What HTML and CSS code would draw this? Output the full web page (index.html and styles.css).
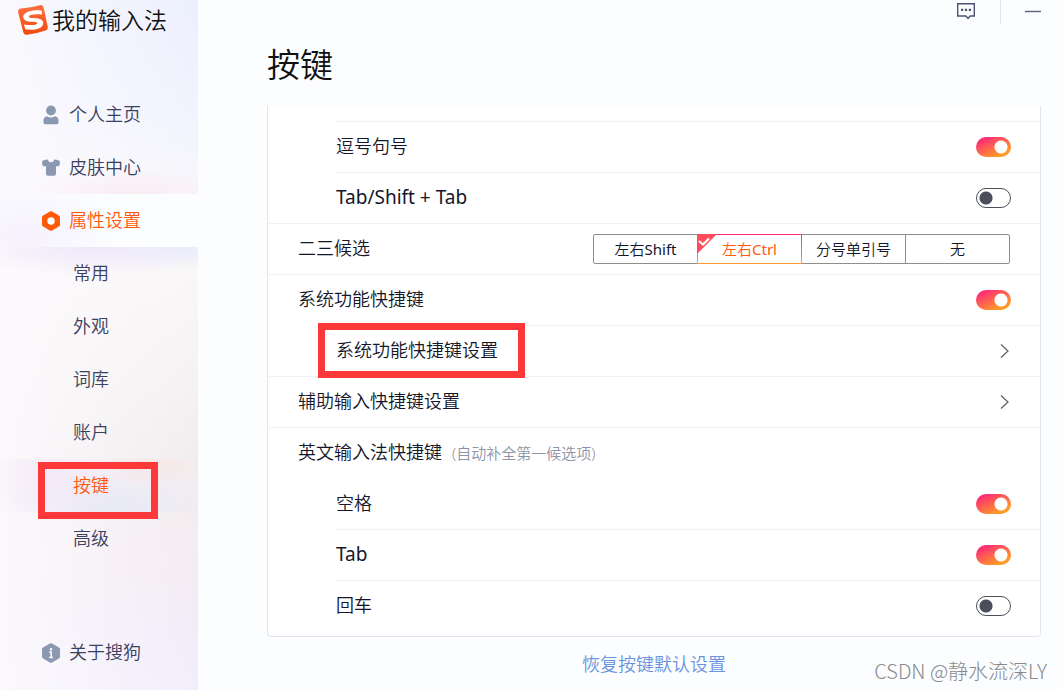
FILE: index.html
```html
<!DOCTYPE html>
<html lang="zh-CN">
<head>
<meta charset="utf-8">
<title>我的输入法</title>
<link rel="stylesheet" href="styles.css">
</head>
<body>
<div class="app">
  <aside class="sidebar">
    <div class="brand">
      <svg class="brand-logo" width="30" height="30" viewBox="0 0 30 30" aria-hidden="true">
        <defs><linearGradient id="logo" x1="0" y1="0" x2="0" y2="1"><stop offset="0" stop-color="#ff7040"/><stop offset="1" stop-color="#f04a10"/></linearGradient></defs>
        <path d="M3 3.6 Q13 2.400 22 .2 Q25 -.3 25.600 2.500 L29.700 21.500 Q30.300 24.600 27.500 25.600 Q18 29 9 29.700 Q6 30 5.300 27.200 L.2 7.500 Q-.4 4 3 3.600Z" fill="url(#logo)"/>
        <path d="M23.800 5.500C15 4.200 6.500 6.500 5.300 11C4.600 15 8.500 16.600 13 16.800C17 17 19.500 17 19.200 18.500C18.500 20.300 11.500 20.600 6 19.400L7.300 24.300C14 25.600 25 24.500 25.300 18.300C25.300 14 20.500 13.300 15.500 13C12 12.800 10.600 12.500 10.900 11.400C11.500 9.500 18.500 8.800 24 9.600Z" fill="#fff"/>
      </svg>
      <span class="brand-name">我的输入法</span>
    </div>
    <nav class="nav">
      <a class="nav-item" href="#home">
        <svg class="nav-icon" width="18" height="20" viewBox="0 0 18 20" fill="#8b98b1"><circle cx="9" cy="5.500" r="4.900"/><path d="M1.500 17.500V15.500Q1.500 12 5 11.300Q7 12.600 9 12.600T13 11.300Q16.500 12 16.500 15.500V17.500Q16.500 19.300 14.800 19.300H3.200Q1.500 19.300 1.500 17.500Z"/></svg>
        <span class="nav-text">个人主页</span></a>
      <a class="nav-item" href="#skin">
        <svg class="nav-icon" width="18" height="20" viewBox="0 0 18 20" fill="#8b98b1"><path d="M1 2.500Q3.500 1.800 5.600 1.600Q6.500 4.300 9 4.300T12.400 1.600Q14.500 1.800 17 2.500Q18 3 18 4L17.500 7.200Q17.300 8.300 16.200 8.300H14V15.700Q14 17.700 12 17.700H6Q4 17.700 4 15.700V8.300H1.800Q.7 8.300 .5 7.200L0 4Q0 3 1 2.500Z"/></svg>
        <span class="nav-text">皮肤中心</span></a>
      <a class="nav-item nav-item-open" href="#settings">
        <svg class="nav-icon" width="18" height="20" viewBox="0 0 18 20"><path d="M7.900 .6Q9 0 10.100 .6L16.900 4.400Q18 5 18 6.200V13.800Q18 15 16.900 15.600L10.100 19.400Q9 20 7.900 19.400L1.100 15.600Q0 15 0 13.800V6.200Q0 5 1.100 4.400Z" fill="#ff5a0a"/><circle cx="9" cy="10" r="3.700" fill="#fff"/></svg>
        <span class="nav-text">属性设置</span></a>
      <a class="nav-item nav-sub" href="#common"><span class="nav-text">常用</span></a>
      <a class="nav-item nav-sub" href="#look"><span class="nav-text">外观</span></a>
      <a class="nav-item nav-sub" href="#words"><span class="nav-text">词库</span></a>
      <a class="nav-item nav-sub" href="#account"><span class="nav-text">账户</span></a>
      <a class="nav-item nav-sub nav-sub-current" href="#keys" aria-current="page"><span class="nav-text">按键</span></a>
      <a class="nav-item nav-sub" href="#advanced"><span class="nav-text">高级</span></a>
    </nav>
    <a class="nav-item nav-about" href="#about">
      <svg class="nav-icon" width="18" height="20" viewBox="0 0 18 20"><path d="M7.900 .6Q9 0 10.100 .6L16.900 4.400Q18 5 18 6.200V13.800Q18 15 16.900 15.600L10.100 19.400Q9 20 7.900 19.400L1.100 15.600Q0 15 0 13.800V6.200Q0 5 1.100 4.400Z" fill="#8b98b1"/><circle cx="9" cy="6.200" r="1.200" fill="#fff"/><path d="M7.300 9H9.200V14.200M7.200 14.500H10.900" fill="none" stroke="#fff" stroke-width="1.500"/></svg>
      <span class="nav-text">关于搜狗</span></a>
  </aside>
  <main class="main">
    <div class="titlebar">
      <button class="tool" type="button" aria-label="反馈">
        <svg width="20" height="18" viewBox="0 0 20 18" fill="none" stroke="#4c5370" stroke-width="1.400"><path d="M1.700 1.700H18.300V14H14.200L12 16.400L9.800 14H1.700Z"/><path d="M5 7.800H7.200M8.900 7.800H11.100M12.800 7.800H15" stroke-width="2.200"/></svg>
      </button>
      <span class="titlebar-line"></span>
      <button class="tool" type="button" aria-label="最小化">
        <svg width="16" height="18" viewBox="0 0 16 18"><path d="M0 9.500H16" stroke="#5b6180" stroke-width="1.400"/></svg>
      </button>
    </div>
    <h1 class="title">按键</h1>
    <section class="panel">
      <div class="row row-indent"><label class="row-name" for="comma">逗号句号</label><input class="switch" type="checkbox" id="comma" checked></div>
      <div class="row row-indent"><label class="row-name row-name-latin" for="shifttab">Tab/Shift + Tab</label><input class="switch" type="checkbox" id="shifttab"></div>
      <div class="row">
        <span class="row-name" id="cand">二三候选</span>
        <div class="segments" role="radiogroup" aria-labelledby="cand">
          <label class="segment"><input class="segment-input" type="radio" name="cand"><span>左右<span class="latin">Shift</span></span></label>
          <label class="segment segment-on"><input class="segment-input" type="radio" name="cand" checked>
            <svg class="segment-mark" width="20" height="20" viewBox="0 0 20 20"><path d="M0 0H20L0 20Z" fill="#ff4b5c"/><path d="M2 7L6 10.500L12 4.500" fill="none" stroke="#fff" stroke-width="2.200"/></svg>
            <span>左右<span class="latin">Ctrl</span></span></label>
          <label class="segment"><input class="segment-input" type="radio" name="cand"><span>分号单引号</span></label>
          <label class="segment"><input class="segment-input" type="radio" name="cand"><span>无</span></label>
        </div>
      </div>
      <div class="row"><label class="row-name" for="sys">系统功能快捷键</label><input class="switch" type="checkbox" id="sys" checked></div>
      <button class="row row-indent" type="button"><span class="row-name row-name-marked">系统功能快捷键设置</span>
        <svg class="chevron" width="10" height="16" viewBox="0 0 10 16"><path d="M1 1.500L8 8L1 14.500"/></svg></button>
      <button class="row" type="button"><span class="row-name">辅助输入快捷键设置</span>
        <svg class="chevron" width="10" height="16" viewBox="0 0 10 16"><path d="M1 1.500L8 8L1 14.500"/></svg></button>
      <div class="row"><span class="row-name">英文输入法快捷键</span><span class="row-note">(自动补全第一候选项)</span></div>
      <div class="row row-indent row-plain"><label class="row-name" for="space">空格</label><input class="switch" type="checkbox" id="space" checked></div>
      <div class="row row-indent"><label class="row-name row-name-latin" for="tab">Tab</label><input class="switch" type="checkbox" id="tab" checked></div>
      <div class="row row-indent"><label class="row-name" for="enter">回车</label><input class="switch" type="checkbox" id="enter"></div>
    </section>
    <a class="reset" href="#reset">恢复按键默认设置</a>
  </main>
  <div class="watermark">CSDN @静水流深LY</div>
</div>
</body>
</html>
```
FILE: styles.css
```css
* { box-sizing: border-box; }
body {
  margin: 0;
  font-family: "Noto Sans", "Noto Sans CJK SC", sans-serif;
  font-size: 18px;
  font-weight: 350;
  line-height: 24px;
  color: #14162a;
  background: #fbfdff;
}
.app { position: relative; display: flex; min-height: 100vh; }

.sidebar {
  width: 198px;
  flex: none;
  display: flex;
  flex-direction: column;
  padding-bottom: 11px;
  background:
    radial-gradient(ellipse 100px 26px at 130px 194px, rgba(250, 232, 238, .7), transparent),
    radial-gradient(ellipse 130px 30px at 90px 247px, rgba(236, 228, 250, .8), transparent),
    radial-gradient(ellipse 90px 24px at 180px 247px, rgba(230, 234, 252, .8), transparent),
    linear-gradient(90deg, rgba(252, 250, 253, .9), rgba(252, 250, 253, 0)),
    linear-gradient(180deg, #eceffe 0, #f1f3fe 110px, #f8f7fb 194px, #f9f7f7 270px, #f5f2f2 380px, #f1edef 460px, #f4ecf1 560px, #f2ecf9 630px, #f2eefc 100%);
}
.brand { display: flex; align-items: center; gap: 4px; height: 40px; padding-left: 18px; margin-bottom: 48px; }
.brand-logo { flex: none; }
.brand-name { padding-bottom: 1px; font-size: 23px; color: #111; }
.nav { display: flex; flex-direction: column; }
.nav-item {
  display: flex;
  align-items: center;
  gap: 9px;
  height: 53px;
  padding-left: 42px;
  color: #3a4060;
  text-decoration: none;
}
.nav-icon { flex: none; }
.nav-text { padding-bottom: 2px; }
.nav-item-open {
  color: #ff5a0a;
  background: radial-gradient(ellipse 90px 60px at 24px 40px, #f6f1fd, transparent), #fbfdff;
}
.nav-sub { padding-left: 73px; }
.nav-sub-current {
  position: relative;
  color: #ff5a0a;
  background:
    radial-gradient(ellipse 70px 50px at 52px 14px, rgba(242, 228, 247, .7), transparent),
    radial-gradient(ellipse 60px 26px at 150px 4px, rgba(248, 228, 226, .8), transparent),
    radial-gradient(ellipse 110px 50px at 110px 50px, rgba(228, 231, 246, .8), transparent);
}
.nav-sub-current::after {
  content: "";
  position: absolute;
  inset: 3px 40px -7px 38px;
  border: 7px solid #fc3838;
}
.nav-about { margin-top: auto; }

.main { flex: 1; display: flex; flex-direction: column; padding: 0 22px 0 69px; }
.titlebar { display: flex; justify-content: flex-end; gap: 24px; height: 24px; }
.tool { display: flex; padding: 2px 0 0; border: 0; background: none; }
.titlebar-line { width: 1px; background: #e4e6ee; }
.title { margin: 0; font-size: 33px; line-height: 82px; font-weight: 350; color: #111; }
.panel {
  padding: 15px 0 5px;
  border: 1px solid #e3e6ef;
  border-top: 0;
  border-radius: 0 0 4px 4px;
  background: #fff;
}
.row {
  display: flex;
  align-items: center;
  width: 100%;
  height: 51px;
  padding: 0 29px 0 30px;
  border: 0;
  background: linear-gradient(#f1f2f5, #f1f2f5) 0 0 / 100% 1px no-repeat;
  font: inherit;
  color: inherit;
  text-align: left;
}
.row-indent { padding-left: 0; width: auto; margin-left: 68px; }
button.row-indent { width: calc(100% - 68px); }
.row-plain { background: none; }
.row-name { margin-right: auto; padding-bottom: 2px; }
.row-name-latin { font-size: 19px; font-weight: 400; }
.latin { font-weight: 400; }
.row-name-marked { position: relative; }
.row-name-marked::after {
  content: "";
  position: absolute;
  inset: -15px -27px -14px -18px;
  border: 7px solid #fc3838;
}
.row-name:has(+ .row-note) { margin-right: 10px; }
.row-note { font-size: 15px; color: #8d94a8; }

.switch {
  appearance: none;
  width: 35px;
  height: 20px;
  margin: 0;
  border: 1px solid #4b4f59;
  border-radius: 10px;
  background: radial-gradient(circle at 9px 9px, #4b4f59 6px, #fff 7px);
}
.switch:checked {
  border: 0;
  background:
    radial-gradient(circle at 25px 10px, #fff 6px, transparent 7px),
    linear-gradient(155deg, #ff2e74 15%, #ff9a28 80%);
}
.chevron { margin-right: 1px; fill: none; stroke: #62646b; stroke-width: 1.3; }

.segments { display: flex; margin-right: 1px; font-size: 15px; }
.segment {
  position: relative;
  display: flex;
  align-items: center;
  justify-content: center;
  width: 105px;
  height: 30px;
  border: 1px solid #8e8e8e;
}
.segment + .segment { margin-left: -1px; }
.segment:first-child { border-radius: 2px 0 0 2px; }
.segment:last-child { border-radius: 0 2px 2px 0; }
.segment-input { position: absolute; opacity: 0; margin: 0; }
.segment-on { z-index: 1; color: #ff5a0a; border-image: linear-gradient(#ff3070, #ff9a30) 1; }
.segment-mark { position: absolute; top: -1px; left: -1px; }

.reset { align-self: center; margin-top: 15px; color: #6a94de; text-decoration: none; }
.watermark {
  position: absolute;
  right: 16px;
  bottom: 7px;
  font-family: "Noto Sans CJK SC", sans-serif;
  font-size: 20px;
  font-weight: 300;
  color: #88898d;
}
```
